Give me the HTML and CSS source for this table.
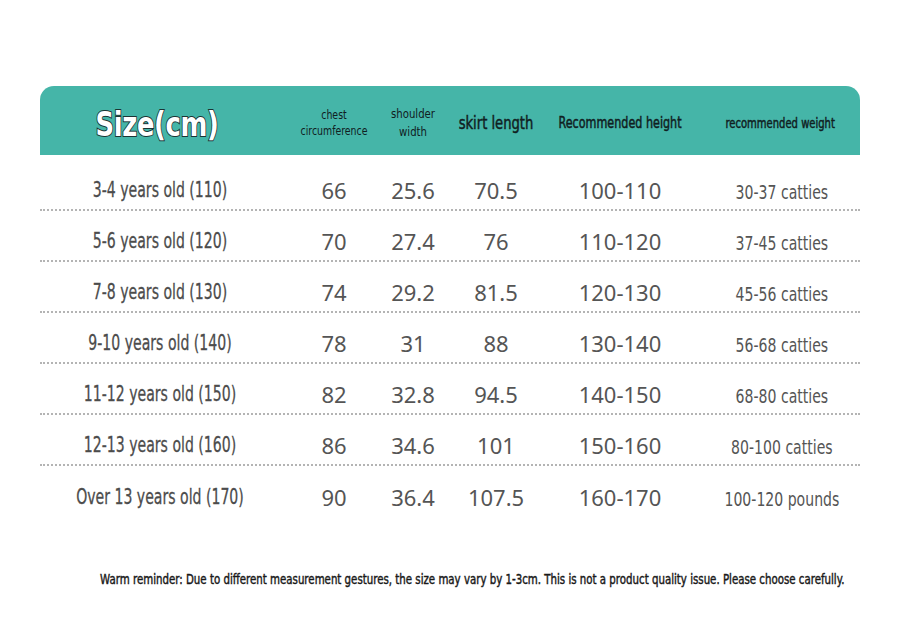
FILE: index.html
```html
<!DOCTYPE html>
<html>
<head lang="en">
    <meta charset="UTF-8">
    <title>Size chart</title>
    <link rel="stylesheet" href="styles.css">
</head>
    <body>
        <div id="chart">
            <div class="head">
                <div class="cell title">Size(cm)</div>
                <div class="cell small">chest<br>circumference</div>
                <div class="cell mid">shoulder<br>width</div>
                <div class="cell big">skirt length</div>
                <div class="cell rec">Recommended height</div>
                <div class="cell rec2">recommended weight</div>
            </div>
            <div class="row first">
                <div class="cell size">3-4 years old (110)</div>
                <div class="cell num">66</div>
                <div class="cell num">25.6</div>
                <div class="cell num">70.5</div>
                <div class="cell num">100-110</div>
                <div class="cell wt">30-37 catties</div>
            </div>
            <div class="row">
                <div class="cell size">5-6 years old (120)</div>
                <div class="cell num">70</div>
                <div class="cell num">27.4</div>
                <div class="cell num">76</div>
                <div class="cell num">110-120</div>
                <div class="cell wt">37-45 catties</div>
            </div>
            <div class="row">
                <div class="cell size">7-8 years old (130)</div>
                <div class="cell num">74</div>
                <div class="cell num">29.2</div>
                <div class="cell num">81.5</div>
                <div class="cell num">120-130</div>
                <div class="cell wt">45-56 catties</div>
            </div>
            <div class="row">
                <div class="cell size">9-10 years old (140)</div>
                <div class="cell num">78</div>
                <div class="cell num">31</div>
                <div class="cell num">88</div>
                <div class="cell num">130-140</div>
                <div class="cell wt">56-68 catties</div>
            </div>
            <div class="row">
                <div class="cell size">11-12 years old (150)</div>
                <div class="cell num">82</div>
                <div class="cell num">32.8</div>
                <div class="cell num">94.5</div>
                <div class="cell num">140-150</div>
                <div class="cell wt">68-80 catties</div>
            </div>
            <div class="row">
                <div class="cell size">12-13 years old (160)</div>
                <div class="cell num">86</div>
                <div class="cell num">34.6</div>
                <div class="cell num">101</div>
                <div class="cell num">150-160</div>
                <div class="cell wt">80-100 catties</div>
            </div>
            <div class="row last">
                <div class="cell size">Over 13 years old (170)</div>
                <div class="cell num">90</div>
                <div class="cell num">36.4</div>
                <div class="cell num">107.5</div>
                <div class="cell num">160-170</div>
                <div class="cell wt">100-120 pounds</div>
            </div>
        </div>
        <p id="note">Warm reminder: Due to different measurement gestures, the size may vary by 1-3cm. This is not a product quality issue. Please choose carefully.</p>
    </body>
</html>
```

FILE: styles.css
```css
*{
    margin: 0px;
    padding: 0px;
}
body{
    font-family: "DejaVu Sans", sans-serif;
    background: #fff;
    width: 900px;
    height: 630px;
    overflow: hidden;
}
#chart{
    width: 820px;
    margin: 86px 0px 0px 40px;
}
.head, .row{
    display: grid;
    grid-template-columns: 240px 108px 50px 116px 132px 174px;
    box-sizing: border-box;
}
.head{
    height: 69px;
    padding-top: 4px;
    background: #45b5a8;
    border-radius: 14px 14px 0px 0px;
    color: #10201f;
}
.cell{
    display: flex;
    justify-content: center;
    align-items: center;
    white-space: nowrap;
    text-align: center;
}
.title{
    font-size: 34px;
    font-weight: bold;
    color: #fff;
    -webkit-text-stroke: 2px #1b3434;
    paint-order: stroke fill;
    letter-spacing: -0.5px;
    padding-right: 8px;
    padding-top: 2px;
    transform: scaleX(0.76);
}
.small{
    font-size: 11.5px;
    line-height: 16px;
    transform: scaleX(0.815);
}
.mid{
    font-size: 13px;
    line-height: 18px;
    transform: scaleX(0.78);
}
.big, .rec, .rec2{
    -webkit-text-stroke: 0.5px #10201f;
}
.big{
    font-size: 18px;
    transform: scaleX(0.73);
}
.rec{
    font-size: 15px;
    transform: scaleX(0.745);
}
.rec2{
    font-size: 14px;
    padding-left: 20px;
    transform: scaleX(0.715);
}
.row{
    height: 51px;
    padding-top: 10px;
    border-bottom: 2px dotted #b4b4b4;
    color: #555;
}
.row.first{
    height: 56px;
    padding-top: 15px;
}
.row.last{
    border-bottom: none;
}
.size{
    font-size: 21px;
    color: #4c4c4c;
    -webkit-text-stroke: 0.3px #4c4c4c;
    transform: scaleX(0.67);
}
.num{
    font-family: "Noto Sans", "Open Sans", sans-serif;
    font-size: 22px;
    color: #555;
}
.wt{
    font-size: 19px;
    color: #555;
    padding-top: 4px;
    padding-left: 24px;
    transform: scaleX(0.74);
}
#note{
    margin: 54px 0px 0px 100px;
    font-size: 14.5px;
    color: #1a1a1a;
    -webkit-text-stroke: 0.5px #1a1a1a;
    white-space: nowrap;
    transform: scaleX(0.705);
    transform-origin: left center;
}
```
